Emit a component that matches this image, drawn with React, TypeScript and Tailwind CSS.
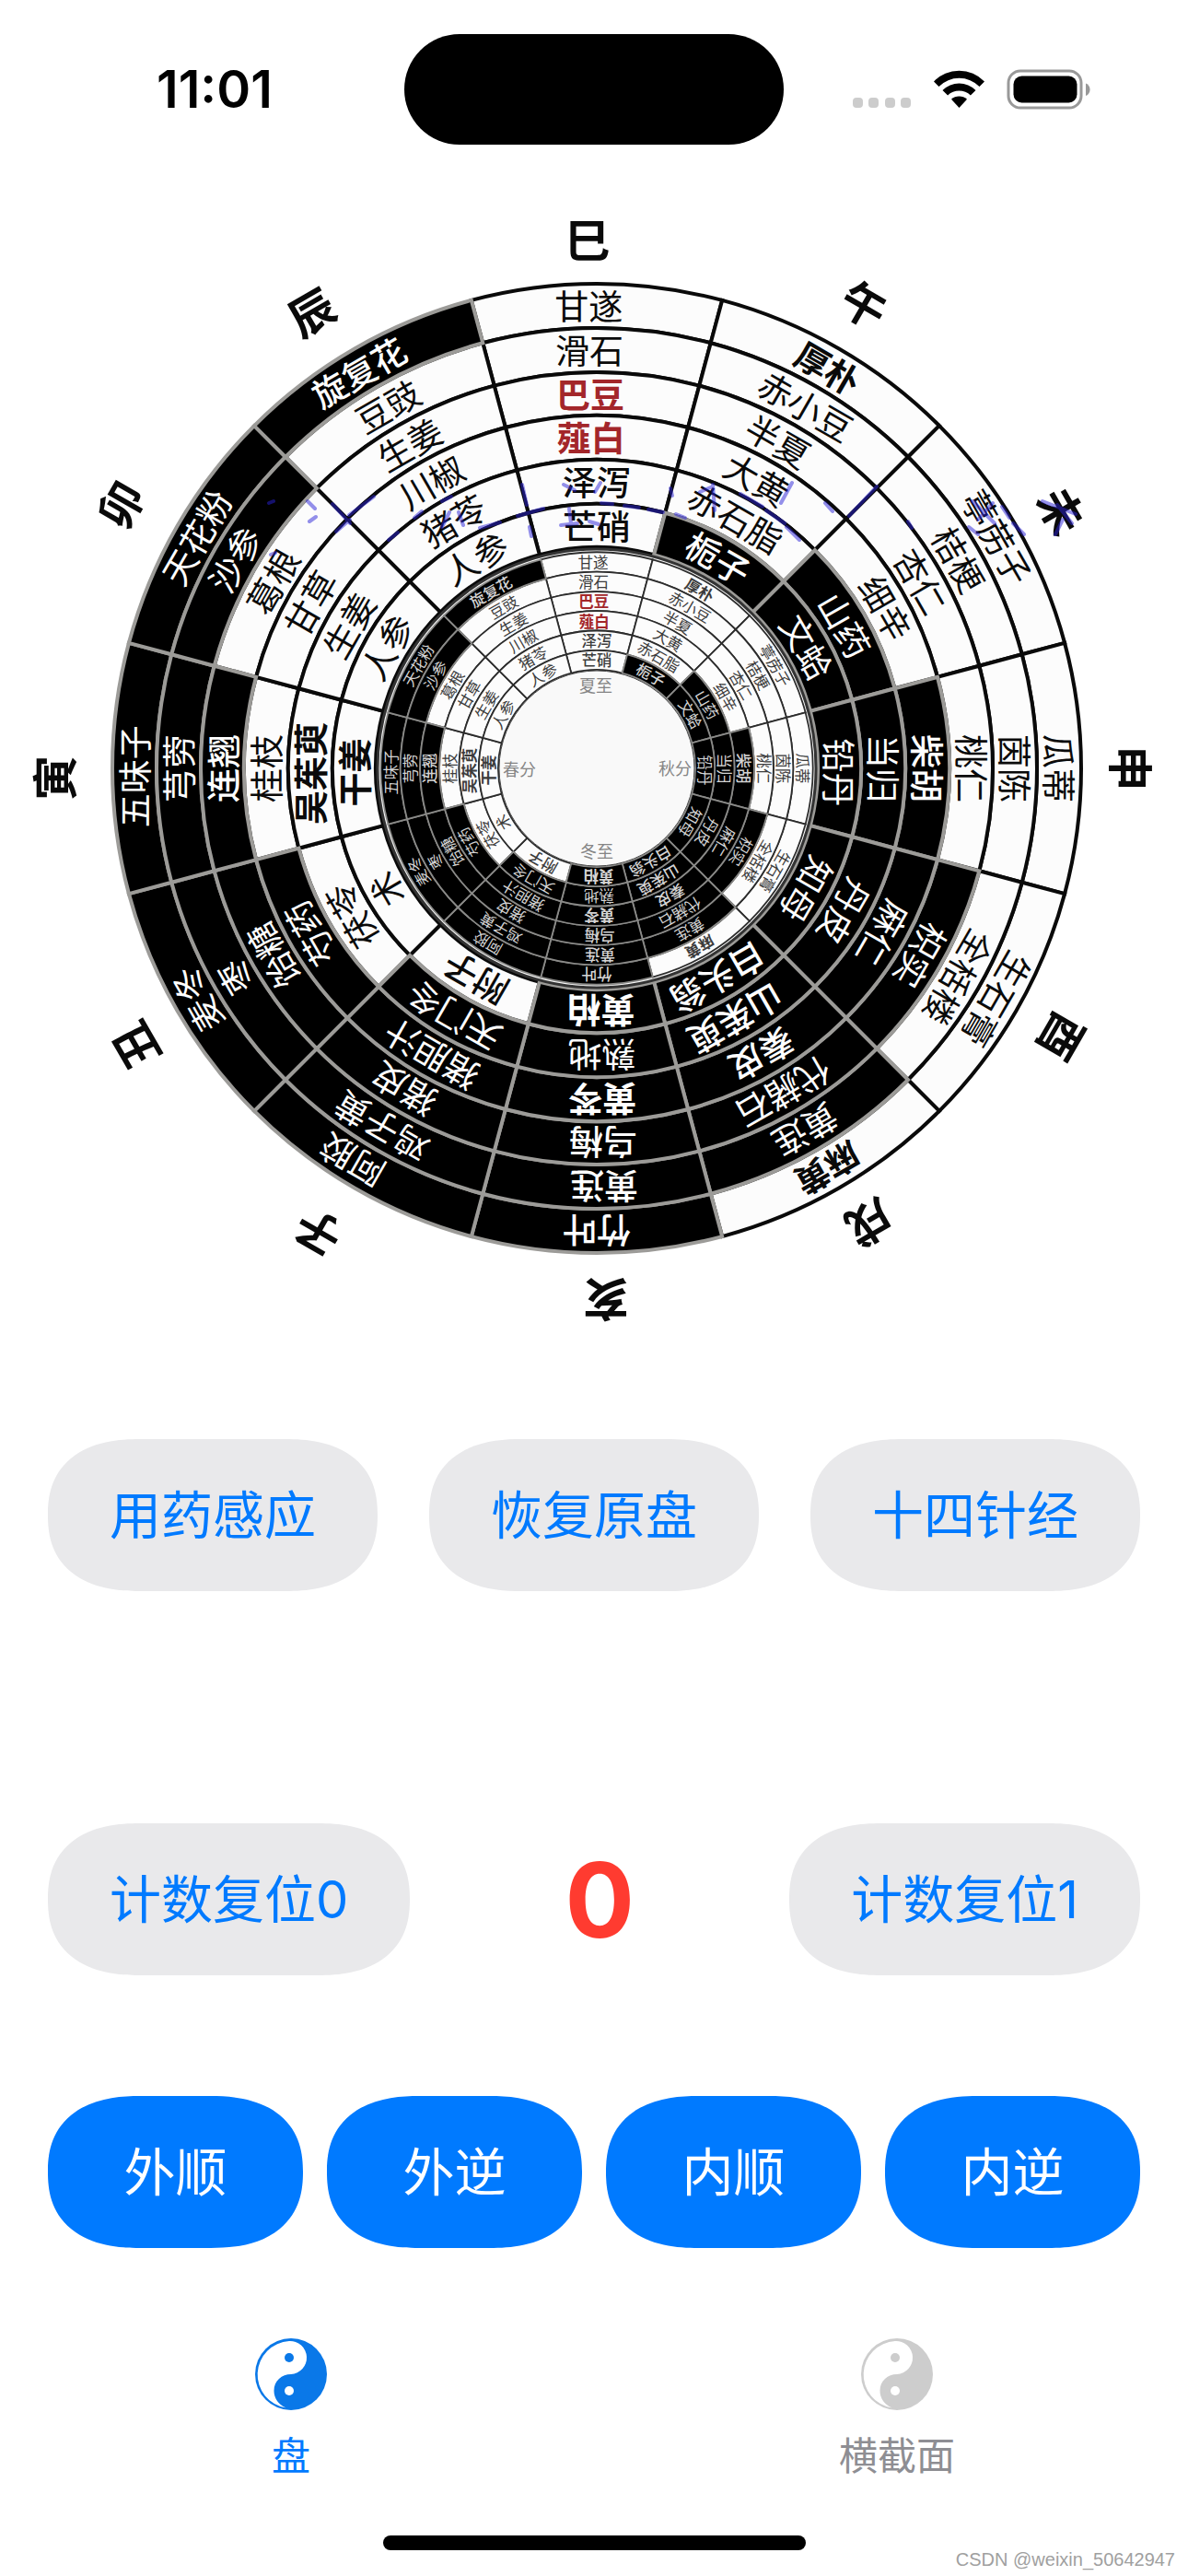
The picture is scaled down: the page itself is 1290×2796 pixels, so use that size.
import React, { useState } from 'react';

interface Herb {
  name: string;
  weight?: number;
  color?: string;
  shift?: number;
}

interface Sector {
  branch: string;
  angle: number;
  radius: number;
  shift: number;
  dark: number[];
  herbs: Herb[];
}

const RADII = [526, 478, 430, 383, 335, 287, 240];
const RED = '#a3262a';

// herbs run from the outermost ring to the innermost one
const SECTORS: Sector[] = [
  {
    branch: '巳', angle: 0, radius: 573, shift: -1, dark: [],
    herbs: [
      { name: '甘遂', shift: -1 },
      { name: '滑石', shift: -1 },
      { name: '巴豆', weight: 700, color: RED, shift: -1 },
      { name: '薤白', weight: 700, color: RED, shift: -1 },
      { name: '泽泻', weight: 500 },
      { name: '芒硝', weight: 500 },
    ],
  },
  {
    branch: '午', angle: 30, radius: 580, shift: 0, dark: [5],
    herbs: [
      { name: '厚朴', weight: 700 },
      { name: '赤小豆' },
      { name: '半夏', shift: -1 },
      { name: '大黄', shift: -1 },
      { name: '赤石脂', shift: -1 },
      { name: '栀子', weight: 500 },
    ],
  },
  {
    branch: '未', angle: 60, radius: 576, shift: 1, dark: [4, 5],
    herbs: [
      { name: '葶苈子' },
      { name: '桔梗' },
      { name: '杏仁' },
      { name: '细辛', shift: 1 },
      { name: '山药' },
      { name: '文蛤' },
    ],
  },
  {
    branch: '申', angle: 90, radius: 579, shift: 0, dark: [3, 4, 5],
    herbs: [
      { name: '瓜蒂' },
      { name: '茵陈' },
      { name: '桃仁' },
      { name: '柴胡', weight: 500 },
      { name: '当归' },
      { name: '铅丹', shift: 1 },
    ],
  },
  {
    branch: '酉', angle: 120, radius: 582, shift: 0, dark: [2, 3, 4, 5],
    herbs: [
      { name: '生石膏' },
      { name: '全栝楼' },
      { name: '枳实' },
      { name: '麻仁' },
      { name: '丹皮' },
      { name: '知母' },
    ],
  },
  {
    branch: '戌', angle: 150, radius: 575, shift: -1, dark: [1, 2, 3, 4, 5],
    herbs: [
      { name: '麻黄', weight: 700 },
      { name: '黄连' },
      { name: '代赭石' },
      { name: '秦皮', weight: 500 },
      { name: '山茱萸', weight: 500, shift: 1 },
      { name: '白头翁', weight: 500 },
    ],
  },
  {
    branch: '亥', angle: 180, radius: 576, shift: -1, dark: [0, 1, 2, 3, 4, 5],
    herbs: [
      { name: '竹叶', weight: 500 },
      { name: '黄连', weight: 500, shift: -1 },
      { name: '乌梅', weight: 500, shift: -1 },
      { name: '黄芩', weight: 700, shift: -1 },
      { name: '熟地', shift: -1 },
      { name: '黄柏', weight: 700, shift: -1 },
    ],
  },
  {
    branch: '子', angle: 210, radius: 587, shift: 1, dark: [0, 1, 2, 3, 4],
    herbs: [
      { name: '阿胶', shift: 2 },
      { name: '鸡子黄', shift: 1 },
      { name: '猪皮', shift: 1 },
      { name: '猪胆汁' },
      { name: '天门冬' },
      { name: '附子', weight: 500 },
    ],
  },
  {
    branch: '丑', angle: 240, radius: 583, shift: -1, dark: [0, 1, 2, 3],
    herbs: [
      { name: '麦冬' },
      { name: '枣' },
      { name: '饴糖' },
      { name: '芍药' },
      { name: '茯苓', shift: -1 },
      { name: '术' },
    ],
  },
  {
    branch: '寅', angle: 270, radius: 588, shift: -1, dark: [0, 1, 2],
    herbs: [
      { name: '五味子', shift: -1 },
      { name: '芎䓖' },
      { name: '连翘', weight: 500 },
      { name: '桂枝' },
      { name: '吴茱萸', weight: 700, shift: -1 },
      { name: '干姜', weight: 700, shift: -1 },
    ],
  },
  {
    branch: '卯', angle: 300, radius: 590, shift: -1, dark: [0, 1],
    herbs: [
      { name: '天花粉' },
      { name: '沙参' },
      { name: '葛根' },
      { name: '甘草' },
      { name: '生姜' },
      { name: '人参' },
    ],
  },
  {
    branch: '辰', angle: 330, radius: 583, shift: -2, dark: [0],
    herbs: [
      { name: '旋复花', weight: 500, shift: -1 },
      { name: '豆豉' },
      { name: '生姜' },
      { name: '川椒' },
      { name: '猪苓' },
      { name: '人参' },
    ],
  },
];

// blue ink specks, relative to the centre of the wheel
const SPECKS = [
  'M-287-287l19 21M-268-270l-15 13M-269-275l27-20M-198-272l8-7M-168-290l10-5M-226-248l10-8',
  'M-127-261l22-6M-168-262l8-16M-150-278l5 14M-86-274l28-8M-81-308l5 22M-73-262l2 10',
  'M-39-264l18-2M-30-282l2 16M-36-308l12 6M-2-300l6-10M5-288l12 1M30-285l16 2M56-281l16 3M-8-268l10 3M80-304l2 8M86-276l10 4',
  'M126-308l2 28M112-300l14-6M156-298l24 14M184-280l20 14M206-262l14 14M200-288l12-22M248-288l8 9M304-306l-30 32M338-268l4 7',
  'M408-290l24 24M414-270l16-18M404-262l10 8M440-284l8 12M452-266l12 12M484-290l36 14M500-286l16 20M506-270l-8 16M-356-288l5-2M-314-290l8 8M-312-268l7-5M-354-232l5-2',
];

const point = (r: number, deg: number) => {
  const a = (deg * Math.PI) / 180;
  return `${(r * Math.sin(a)).toFixed(2)} ${(-r * Math.cos(a)).toFixed(2)}`;
};

const cellPath = (outer: number, inner: number, angle: number) => {
  const from = angle - 15;
  const to = angle + 15;
  return `M${point(outer, from)}A${outer} ${outer} 0 0 1 ${point(outer, to)}L${point(inner, to)}A${inner} ${inner} 0 0 0 ${point(inner, from)}Z`;
};

interface WheelProps {
  line: string;
  darkLine: string;
  ink: string;
  darkInk: string;
}

const Wheel: React.FC<WheelProps> = ({ line, darkLine, ink, darkInk }) => (
  <g>
    {[false, true].map((isDark) =>
      SECTORS.map((sector) =>
        sector.herbs.map((herb, ring) =>
          sector.dark.includes(ring) === isDark ? (
            <path
              key={`${sector.branch}${ring}`}
              d={cellPath(RADII[ring], RADII[ring + 1], sector.angle)}
              fill={isDark ? '#000' : '#fcfcfc'}
              stroke={isDark ? darkLine : line}
              strokeWidth={4}
            />
          ) : null
        )
      )
    )}
    {SECTORS.map((sector) =>
      sector.herbs.map((herb, ring) => (
        <text
          key={`${sector.branch}${ring}`}
          transform={`rotate(${sector.angle + (herb.shift ?? 0)}) translate(0 ${-(RADII[ring] + RADII[ring + 1]) / 2}) rotate(${-(herb.shift ?? 0)})`}
          dy="15"
          textAnchor="middle"
          fontSize={37}
          fontWeight={herb.weight ?? 400}
          fill={herb.color ?? (sector.dark.includes(ring) ? darkInk : ink)}
        >
          {herb.name}
        </text>
      ))
    )}
  </g>
);

const SEASONS = [
  { name: '夏至', x: -1, y: -90 },
  { name: '春分', x: -84, y: 1 },
  { name: '秋分', x: 85, y: 0 },
  { name: '冬至', x: 0, y: 90 },
];

const HerbDisc: React.FC<{ outer: number; inner: number }> = ({ outer, inner }) => (
  <svg viewBox="-645 -677 1290 1290" className="block w-full overflow-visible font-['Noto_Sans_CJK_SC',sans-serif]">
    <g transform="translate(3 0)">
      {SECTORS.map((sector) => (
        <text
          key={sector.branch}
          transform={`rotate(${sector.angle + sector.shift}) translate(0 ${-sector.radius}) rotate(${-sector.shift})`}
          dy="18"
          textAnchor="middle"
          fontSize={49}
          fontWeight={700}
          fill="#0a0a0a"
        >
          {sector.branch}
        </text>
      ))}
      <g transform={`rotate(${outer})`}>
        <Wheel line="#0a0a0a" darkLine="#9c9b98" ink="#0a0a0a" darkInk="#fff" />
      </g>
      <circle r={238} fill="#fcfcfc" stroke="#333" strokeWidth={3} />
      <g transform={`rotate(${inner}) scale(0.446)`}>
        <Wheel line="#2c2c2c" darkLine="#8a8a88" ink="#3c3c3c" darkInk="#d4d4d4" />
      </g>
      <circle r={106} fill="#f9f9f9" stroke="#444" />
      {SEASONS.map((season) => (
        <text key={season.name} x={season.x} y={season.y} dy="7" textAnchor="middle" fontSize={18} fill="#858585">
          {season.name}
        </text>
      ))}
      {SPECKS.map((d) => (
        <path key={d} d={d} fill="none" stroke="#2a22d8" strokeWidth={4} strokeLinecap="round" opacity={0.5} />
      ))}
    </g>
  </svg>
);

const StatusBar: React.FC = () => (
  <header className="grid grid-cols-[1fr_412px_1fr] items-center pt-[37px]">
    <div className="pl-[170px] text-[56px] leading-[60px] font-semibold">11:01</div>
    <div className="h-[120px] rounded-full bg-black" />
    <div className="flex items-center justify-end pr-[106px]">
      <svg viewBox="0 0 258 44" className="h-[44px] w-[258px]">
        {[0, 17, 35, 52].map((x) => (
          <rect key={x} x={x} y={31} width={11} height={11} rx={4} fill="#ccc" />
        ))}
        <path d="M88 13.500a38 38 0 0 1 55 0l-5.500 5.500a31 31 0 0 0-44 0z" />
        <path d="M97.500 23a25.500 25.500 0 0 1 36 0l-5.600 5.600a17.500 17.500 0 0 0-24.800 0z" />
        <path d="M107 32.800a12.600 12.600 0 0 1 17 0l-8.500 9.200z" />
        <rect x={169} y={2} width={79} height={40} rx={13} fill="none" stroke="#999" strokeWidth={3} />
        <rect x={174.500} y={7.500} width={69} height={29} rx={9} />
        <path d="M253 15.500c6 2 6 11.500 0 13.500z" fill="#999" />
      </svg>
    </div>
  </header>
);

const YinYang: React.FC<{ active: boolean }> = ({ active }) => {
  const color = active ? '#0a78e8' : '#cdcdcd';
  return (
    <svg viewBox="0 0 78 78" className="size-[78px]">
      <circle cx={39} cy={39} r={39} fill={color} />
      <path d="M37 3a18 18 0 0 1 2 36c-10 0-18.500 7-18.500 18c0 8 5 15 13 18.500A36.500 36.500 0 0 1 37 3z" fill="#fff" />
      <circle cx={37} cy={21} r={5} fill={color} />
      <circle cx={37} cy={57} r={5} fill="#fff" />
    </svg>
  );
};

const GRAY_BUTTON = 'h-[165px] rounded-[100px/82px] [corner-shape:superellipse(1.25)] bg-[#e9e9eb] px-[67px] text-[56px] text-[#007aff]';
const BLUE_BUTTON = 'h-[165px] rounded-[100px/82px] [corner-shape:superellipse(1.25)] bg-[#007aff] text-[56px] text-white';

const App: React.FC = () => {
  const [count, setCount] = useState(0);
  const [outer, setOuter] = useState(0);
  const [inner, setInner] = useState(0);
  const [tab, setTab] = useState('盘');

  const turn = (set: React.Dispatch<React.SetStateAction<number>>, step: number) => {
    set((value) => value + step);
    setCount((value) => value + 1);
  };

  const reset = () => {
    setOuter(0);
    setInner(0);
  };

  return (
    <div className="relative min-h-screen bg-white text-black font-['Inter','Noto_Sans_CJK_SC',sans-serif]">
      <StatusBar />

      <main>
        <HerbDisc outer={outer} inner={inner} />

        <div className="mt-[115px] flex justify-between px-[52px]">
          <button className={GRAY_BUTTON}>用药感应</button>
          <button className={GRAY_BUTTON} onClick={reset}>恢复原盘</button>
          <button className={GRAY_BUTTON}>十四针经</button>
        </div>

        <div className="mt-[252px] flex items-center justify-between px-[52px]">
          <button className={GRAY_BUTTON} onClick={() => setCount(0)}>计数复位0</button>
          <output className="text-[112px] leading-[120px] font-bold text-[#ff3b30]">{count}</output>
          <button className={GRAY_BUTTON} onClick={() => setCount(1)}>计数复位1</button>
        </div>

        <div className="mt-[131px] grid grid-cols-4 gap-[26px] px-[52px]">
          <button className={BLUE_BUTTON} onClick={() => turn(setOuter, 30)}>外顺</button>
          <button className={BLUE_BUTTON} onClick={() => turn(setOuter, -30)}>外逆</button>
          <button className={BLUE_BUTTON} onClick={() => turn(setInner, 30)}>内顺</button>
          <button className={BLUE_BUTTON} onClick={() => turn(setInner, -30)}>内逆</button>
        </div>
      </main>

      <nav className="mt-[98px] grid grid-cols-2 gap-[26px]">
        {['盘', '横截面'].map((name) => (
          <button key={name} onClick={() => setTab(name)} className="flex flex-col items-center gap-[20px]">
            <YinYang active={tab === name} />
            <span className={tab === name ? 'text-[42px] leading-[60px] text-[#007aff]' : 'text-[42px] leading-[60px] text-[#8e8e93]'}>
              {name}
            </span>
          </button>
        ))}
      </nav>

      <div className="mx-auto mt-[56px] h-[16px] w-[459px] rounded-full bg-black" />
      <p className="absolute right-[14px] bottom-[6px] font-['Liberation_Sans',sans-serif] text-[20px] leading-[24px] text-[#a0a0a0]">
        CSDN @weixin_50642947
      </p>
    </div>
  );
};

export default App;
